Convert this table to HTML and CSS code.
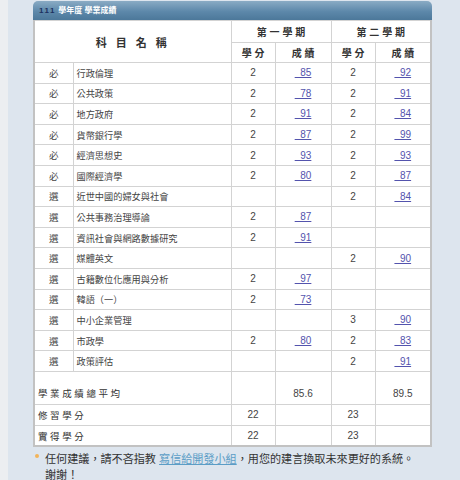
FILE: index.html
```html
<!DOCTYPE html>
<html lang="zh-Hant">
<head>
<meta charset="utf-8">
<title>學業成績</title>
<link rel="stylesheet" href="styles.css">
</head>
<body>
<div class="page">
  <div class="panel">
    <div class="bar"><span class="year">111</span> 學年度 學業成績</div>
    <table class="grades">
      <colgroup>
        <col class="c-type"><col class="c-name"><col class="c-cr"><col class="c-sc"><col class="c-cr"><col class="c-sc">
      </colgroup>
      <thead>
        <tr class="h1">
          <th colspan="2" rowspan="2" class="subj">科 目 名 稱</th>
          <th colspan="2">第 一 學 期</th>
          <th colspan="2">第 二 學 期</th>
        </tr>
        <tr class="h2">
          <th>學 分</th><th>成 績</th><th>學 分</th><th>成 績</th>
        </tr>
      </thead>
      <tbody>
        <tr><td class="type">必</td><td class="name">行政倫理</td><td class="num">2</td><td class="num"><a href="#">&nbsp;&nbsp;85</a></td><td class="num">2</td><td class="num"><a href="#">&nbsp;&nbsp;92</a></td></tr>
        <tr><td class="type">必</td><td class="name">公共政策</td><td class="num">2</td><td class="num"><a href="#">&nbsp;&nbsp;78</a></td><td class="num">2</td><td class="num"><a href="#">&nbsp;&nbsp;91</a></td></tr>
        <tr><td class="type">必</td><td class="name">地方政府</td><td class="num">2</td><td class="num"><a href="#">&nbsp;&nbsp;91</a></td><td class="num">2</td><td class="num"><a href="#">&nbsp;&nbsp;84</a></td></tr>
        <tr><td class="type">必</td><td class="name">貨幣銀行學</td><td class="num">2</td><td class="num"><a href="#">&nbsp;&nbsp;87</a></td><td class="num">2</td><td class="num"><a href="#">&nbsp;&nbsp;99</a></td></tr>
        <tr><td class="type">必</td><td class="name">經濟思想史</td><td class="num">2</td><td class="num"><a href="#">&nbsp;&nbsp;93</a></td><td class="num">2</td><td class="num"><a href="#">&nbsp;&nbsp;93</a></td></tr>
        <tr><td class="type">必</td><td class="name">國際經濟學</td><td class="num">2</td><td class="num"><a href="#">&nbsp;&nbsp;80</a></td><td class="num">2</td><td class="num"><a href="#">&nbsp;&nbsp;87</a></td></tr>
        <tr><td class="type">選</td><td class="name">近世中國的婦女與社會</td><td class="num"></td><td class="num"></td><td class="num">2</td><td class="num"><a href="#">&nbsp;&nbsp;84</a></td></tr>
        <tr><td class="type">選</td><td class="name">公共事務治理導論</td><td class="num">2</td><td class="num"><a href="#">&nbsp;&nbsp;87</a></td><td class="num"></td><td class="num"></td></tr>
        <tr><td class="type">選</td><td class="name">資訊社會與網路數據研究</td><td class="num">2</td><td class="num"><a href="#">&nbsp;&nbsp;91</a></td><td class="num"></td><td class="num"></td></tr>
        <tr><td class="type">選</td><td class="name">媒體英文</td><td class="num"></td><td class="num"></td><td class="num">2</td><td class="num"><a href="#">&nbsp;&nbsp;90</a></td></tr>
        <tr><td class="type">選</td><td class="name">古籍數位化應用與分析</td><td class="num">2</td><td class="num"><a href="#">&nbsp;&nbsp;97</a></td><td class="num"></td><td class="num"></td></tr>
        <tr><td class="type">選</td><td class="name">韓語（一）</td><td class="num">2</td><td class="num"><a href="#">&nbsp;&nbsp;73</a></td><td class="num"></td><td class="num"></td></tr>
        <tr><td class="type">選</td><td class="name">中小企業管理</td><td class="num"></td><td class="num"></td><td class="num">3</td><td class="num"><a href="#">&nbsp;&nbsp;90</a></td></tr>
        <tr><td class="type">選</td><td class="name">市政學</td><td class="num">2</td><td class="num"><a href="#">&nbsp;&nbsp;80</a></td><td class="num">2</td><td class="num"><a href="#">&nbsp;&nbsp;83</a></td></tr>
        <tr><td class="type">選</td><td class="name">政策評估</td><td class="num"></td><td class="num"></td><td class="num">2</td><td class="num"><a href="#">&nbsp;&nbsp;91</a></td></tr>
      </tbody>
      <tfoot>
        <tr class="avg"><td colspan="2" class="label">學業成績總平均</td><td class="num"></td><td class="num">85.6</td><td class="num"></td><td class="num">89.5</td></tr>
        <tr class="sum"><td colspan="2" class="label">修習學分</td><td class="num">22</td><td class="num"></td><td class="num">23</td><td class="num"></td></tr>
        <tr class="sum"><td colspan="2" class="label">實得學分</td><td class="num">22</td><td class="num"></td><td class="num">23</td><td class="num"></td></tr>
      </tfoot>
    </table>
  </div>
  <p class="note"><span class="dot"></span>任何建議，請不吝指教 <a href="#">寫信給開發小組</a>，用您的建言換取未來更好的系統。<br>謝謝！</p>
</div>
</body>
</html>
```

FILE: styles.css
```css
html, body {
  margin: 0;
  padding: 0;
  background: #eceef1;
}
body {
  font-family: "Liberation Sans", "Noto Sans CJK TC", sans-serif;
  color: #333;
}
.page {
  margin-left: 8px;
  background: #dde5ee;
  height: 480px;
  overflow: hidden;
  padding-top: 1px;
  box-sizing: border-box;
}
.panel {
  margin-left: 25px;
  width: 399px;
}
.bar {
  height: 19px;
  line-height: 19px;
  border-radius: 5px 5px 0 0;
  background: linear-gradient(#8aabc4, #5d88aa 55%, #4c789a);
  color: #fff;
  font-size: 8px;
  padding-left: 6px;
  font-weight: bold;
}
.bar .year {
  color: #1d3160;
  letter-spacing: 1.5px;
  font-size: 8px;
}
.grades {
  width: 399px;
  table-layout: fixed;
  border-collapse: collapse;
  background: #fff;
  border: 2px solid #c2c2c2;
  border-top: 0;
}
.c-type { width: 39px; }
.c-name { width: 158px; }
.c-cr { width: 44px; }
.c-sc { width: 56px; }
.grades th, .grades td {
  border: 1px solid #d3d3d3;
  padding: 0;
  text-align: center;
  vertical-align: middle;
}
.grades th {
  font-weight: bold;
  font-size: 10px;
  color: #333;
}
.grades th.subj {
  font-size: 11px;
  letter-spacing: 3px;
}
.h1 { height: 22px; }
.h2 { height: 20px; }
tbody tr { height: 20.6px; }
.type {
  font-size: 9.5px;
  color: #444;
}
.name {
  text-align: left !important;
  padding-left: 3px !important;
  font-size: 9.2px;
  color: #444;
}
.num {
  font-size: 10px;
  color: #444;
}
.num a {
  color: #5353ad;
  text-decoration: underline;
}
.avg { height: 33px; }
.avg td {
  vertical-align: bottom;
  padding-bottom: 3px;
  line-height: 14px;
}
.sum { height: 21px; }
.label {
  text-align: left !important;
  padding-left: 3px !important;
  font-size: 9.5px;
  letter-spacing: 2.6px;
}
.note {
  margin: 0;
  padding-left: 37px;
  padding-top: 4px;
  font-size: 11.1px;
  line-height: 16px;
  color: #333;
  position: relative;
}
.note a {
  color: #5b9dc6;
  text-decoration: underline;
}
.dot {
  position: absolute;
  left: 27px;
  top: 7px;
  width: 4px;
  height: 4px;
  border-radius: 50%;
  background: #f2b45a;
}
```
